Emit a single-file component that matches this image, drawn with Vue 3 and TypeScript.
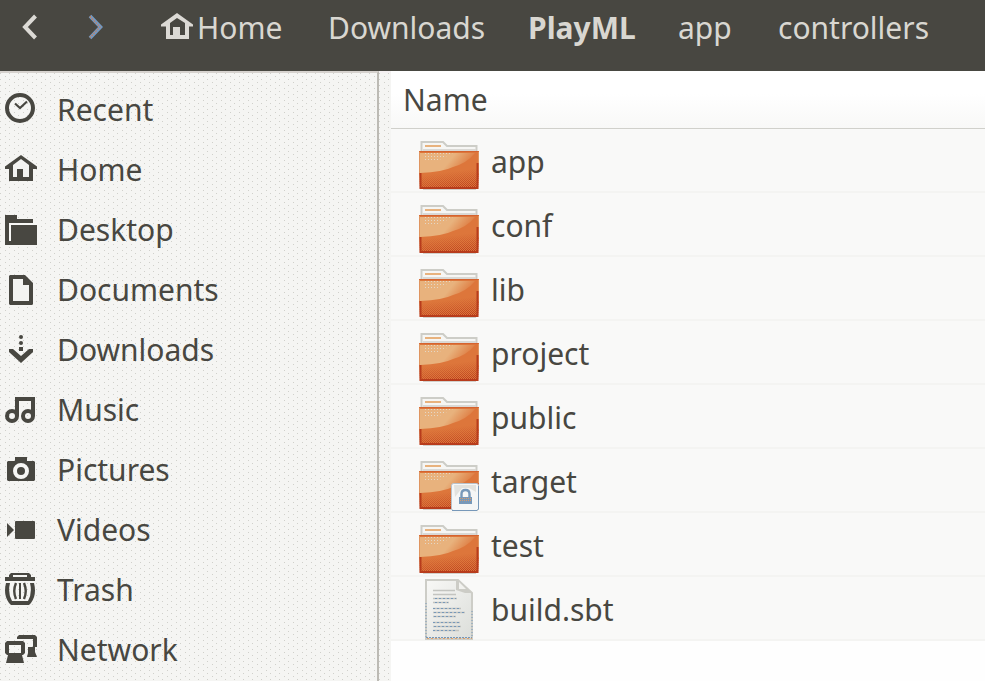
<script setup lang="ts">
import { ref } from 'vue'

interface Crumb { label: string; size: string; home?: boolean }
interface Entry { name: string; kind: 'folder' | 'file'; locked?: boolean }

const crumbs: Crumb[] = [
  { label: 'Home', size: 'wide', home: true },
  { label: 'Downloads', size: 'wider' },
  { label: 'PlayML', size: 'medium' },
  { label: 'app', size: 'small' },
  { label: 'controllers', size: 'wide' },
]
const current = ref('PlayML')

const places: string[] = [
  'Recent', 'Home', 'Desktop', 'Documents', 'Downloads',
  'Music', 'Pictures', 'Videos', 'Trash', 'Network',
]

const entries: Entry[] = [
  { name: 'app', kind: 'folder' },
  { name: 'conf', kind: 'folder' },
  { name: 'lib', kind: 'folder' },
  { name: 'project', kind: 'folder' },
  { name: 'public', kind: 'folder' },
  { name: 'target', kind: 'folder', locked: true },
  { name: 'test', kind: 'folder' },
  { name: 'build.sbt', kind: 'file' },
]
</script>

<template>
  <div class="window">
    <svg class="defs" aria-hidden="true">
      <defs>
        <linearGradient id="fade" x1="0.4" y1="0" x2="0.6" y2="1">
          <stop offset="0.55" stop-color="#000" />
          <stop offset="1" stop-color="#fff" />
        </linearGradient>
        <linearGradient id="gloss" x1="0" y1="0" x2="1" y2="0.3">
          <stop offset="0" stop-color="#e8b27d" />
          <stop offset="0.6" stop-color="#e8b27d" />
          <stop offset="1" stop-color="#e8b27d" stop-opacity="0" />
        </linearGradient>
        <linearGradient id="sheet" x1="0" y1="0" x2="1" y2="1">
          <stop offset="0" stop-color="#f8f8f6" />
          <stop offset="1" stop-color="#dcdeda" />
        </linearGradient>
        <pattern id="dots" width="2" height="2" patternUnits="userSpaceOnUse">
          <rect width="1" height="1" fill="#b83c1c" />
          <rect x="1" y="1" width="1" height="1" fill="#b83c1c" />
        </pattern>
        <pattern id="sparks" width="3" height="3" patternUnits="userSpaceOnUse">
          <rect width="1" height="1" fill="#e3e0d8" />
        </pattern>
        <mask id="shade"><rect y="22" width="60" height="38" fill="url(#fade)" /></mask>
      </defs>
    </svg>

    <header class="toolbar">
      <nav class="history" aria-label="History">
        <button type="button" class="arrow" aria-label="Back">
          <svg width="18" height="26" viewBox="0 0 18 26"><path d="M14.5 2 L4 13 L14.5 24" fill="none" stroke="#dcdad5" stroke-width="4" /></svg>
        </button>
        <button type="button" class="arrow" aria-label="Forward">
          <svg width="18" height="26" viewBox="0 0 18 26"><path d="M3 2 L13.5 13 L3 24" fill="none" stroke="#7399c2" stroke-width="3.6" /><path d="M3 2.5 L13 13 L3 23.5" fill="none" stroke="#d67b4a" stroke-width="1.2" stroke-dasharray="1.4 1.4" /></svg>
        </button>
      </nav>
      <nav class="path" aria-label="Path">
        <button
          v-for="crumb in crumbs"
          :key="crumb.label"
          type="button"
          class="crumb"
          :class="[crumb.size, { current: current === crumb.label }]"
          @click="current = crumb.label"
        >
          <svg v-if="crumb.home" class="crumb-icon" width="32" height="28" viewBox="0 0 32 28">
            <path d="M0 12.5 L16 1 L32 12.5 V14.5 H28 V27 H5 V14.5 H0 Z" fill="#dcdad5" />
            <path d="M9 23 V11 L16 6 L24 11 V23 H19 V15 H12 V23 Z" fill="#484741" />
          </svg>
          {{ crumb.label }}
        </button>
      </nav>
    </header>

    <div class="body">
      <aside class="sidebar">
        <ul class="places">
          <li v-for="place in places" :key="place">
            <a class="place" href="#">
              <svg class="glyph" width="32" height="32" viewBox="0 0 32 32" fill="#484741" aria-hidden="true">
                <g v-if="place === 'Recent'" fill="none" stroke="#484741">
                  <circle cx="15" cy="15" r="13" stroke-width="4" />
                  <path d="M10 10.5 L15 15 L22 8.5" stroke-width="2.2" />
                </g>
                <g v-else-if="place === 'Home'">
                  <path d="M0 13.5 L16 2 L32 13.5 V16 H28 V28 H4 V16 H0 Z" />
                  <path d="M8 24 V12 L16 6 L24 12 V24 H18 V16 H12 V24 Z" fill="#f3f3f1" />
                </g>
                <g v-else-if="place === 'Desktop'">
                  <path d="M0 2 H12 V6 H28 V10 H4 V28 H6 V12 H32 V32 H0 Z" />
                  <path d="M4 10 H32 V12 H6 V28 H4 Z" fill="#f8f8f6" />
                </g>
                <g v-else-if="place === 'Documents'">
                  <path d="M5 2 H20 L28 10 V31 L27 32 H5 L4 31 V3 Z" />
                  <path d="M8 6 H18 V12 H24 V28 H8 Z" fill="#f3f3f1" />
                </g>
                <g v-else-if="place === 'Downloads'">
                  <circle cx="16" cy="4" r="2" /><circle cx="16" cy="10" r="2" />
                  <rect x="14" y="14" width="4" height="4" />
                  <path d="M4 16 H8 L16 23 L24 16 H28 V19 L16 30 L4 19 Z" />
                </g>
                <g v-else-if="place === 'Music'">
                  <g fill="none" stroke="#484741" stroke-width="4">
                    <circle cx="7" cy="23" r="5" /><circle cx="23" cy="23" r="5" />
                    <path d="M12 23 V6 H28 V23" />
                  </g>
                </g>
                <g v-else-if="place === 'Pictures'">
                  <path d="M3 8 H10 V4 H22 V8 H29 L30 9 V27 L29 28 H3 L2 27 V9 Z" />
                  <circle cx="16" cy="18" r="6" fill="none" stroke="#f7f7f5" stroke-width="4" />
                </g>
                <g v-else-if="place === 'Videos'">
                  <path d="M2 10 L9 17 L2 24 Z" /><rect x="10" y="8" width="20" height="18" rx="1" />
                </g>
                <g v-else-if="place === 'Trash'">
                  <path d="M4 4 V2 L6 0 H24 L26 2 V4 H30 V8 H0 V4 Z M8 4 H22 V2 H8 Z" fill-rule="evenodd" />
                  <path d="M1 10 H5 Q2.5 20 7 28 H23 Q27.5 20 25 10 H29 Q32 22 26 30 L24 32 H6 L4 30 Q-2 22 1 10 Z" />
                  <path d="M11 10 Q7.5 18 11 26 M19 10 Q22.5 18 19 26" fill="none" stroke="#484741" stroke-width="2.4" />
                  <rect x="14" y="10" width="2" height="16" />
                </g>
                <g v-else>
                  <path d="M14 2 H30 L32 4 V14 H30 V19 L32 24 H22 L23 20 V14 H28 V6 H12 V4 Z" />
                  <path d="M2 8 H18 L20 10 V20 L18 22 H17 L19 30 H1 L3 22 H2 L0 20 V10 Z M4 12 V20 H16 V12 Z" fill-rule="evenodd" />
                </g>
              </svg>
              <span>{{ place }}</span>
            </a>
          </li>
        </ul>
      </aside>
      <div class="splitter"></div>
      <main class="files">
        <table class="listing">
          <thead>
            <tr><th scope="col">Name</th></tr>
          </thead>
          <tbody>
            <tr v-for="entry in entries" :key="entry.name">
              <td>
                <div class="entry">
                  <svg v-if="entry.kind === 'folder'" width="60" height="64" viewBox="0 0 60 64" aria-hidden="true">
                    <path d="M2.5 24 V13 H24 L28 17 H57.5 V24 Z" fill="#f6f6f4" stroke="#cdcdc7" stroke-width="2" />
                    <rect x="6" y="16" width="16" height="2" fill="#e8b27d" />
                    <rect x="4" y="20" width="53" height="2" fill="#dad9d5" />
                    <path d="M0 22 H60 V43 L59 60 H1 L0 43 Z" fill="#dd763b" />
                    <path d="M1 24 H56 Q48 34 34 38 Q24 43 1 44 Z" fill="url(#gloss)" />
                    <path d="M4 24 H34 L20 31 H4 Z" fill="url(#sparks)" opacity="0.8" />
                    <path d="M0 22 H60 V43 L59 60 H1 L0 43 Z" fill="url(#dots)" mask="url(#shade)" />
                    <path d="M0.5 22.5 H59.5" stroke="#d5632f" />
                    <path d="M0.5 23 V44 M59.5 23 V44" stroke="#df9560" />
                    <path d="M1.5 44 V59 H58.5 V34" fill="none" stroke="#b83c1c" stroke-width="2" />
                    <path d="M4 60.5 H57" stroke="#d2d0cb" />
                    <g v-if="entry.locked">
                      <rect x="32.5" y="34.5" width="27" height="27" rx="2" fill="#f5f6f6" stroke="#b7c2cc" />
                      <path d="M33 61.5 H58 L59.5 60 V37" fill="none" stroke="#7798b9" />
                      <path d="M35 36 H57 V43 L50 39 H43 L36 48 Z" fill="#e2e2de" />
                      <path d="M42.5 49 V45 Q42.5 41 46.5 41 Q50.5 41 50.5 45 V49" fill="none" stroke="#7798b9" stroke-width="2.4" />
                      <rect x="40" y="48" width="13" height="7" fill="#7798b9" />
                      <path d="M41 49.5 H52 M41 51.5 H52" stroke="#d79b6c" stroke-dasharray="1 1" />
                    </g>
                  </svg>
                  <svg v-else width="60" height="64" viewBox="0 0 60 64" aria-hidden="true">
                    <path d="M7 3 H39 L53 16 V62 H7 Z" fill="url(#sheet)" stroke="#cdcdc7" stroke-width="2" />
                    <path d="M37 3 V13 L46 16 H53 L39 3 Z" fill="#ccccc6" />
                    <path d="M40 5 V12 H47 Z" fill="#f2f2ef" />
                    <g stroke="#c3c4c0" stroke-width="1.6">
                      <path d="M14 13.5 H36 M14 17.5 H37 M14 21.5 H38 M14 25.5 H30 M14 31.5 H42 M14 35.5 H46 M14 39.5 H37 M14 45.5 H41 M14 49.5 H42 M14 53.5 H40" />
                    </g>
                    <g stroke="#7798b9" stroke-dasharray="2 2">
                      <path d="M16 21.5 H37 M16 25.5 H29 M14 31.5 H40 M15 35.5 H45 M15 39.5 H36 M14 45.5 H40 M15 49.5 H41 M14 53.5 H38" />
                    </g>
                    <path d="M7 26 V60 M53 34 V60" stroke="#7798b9" stroke-dasharray="1 2" />
                    <path d="M7 60.5 H53" stroke="#7798b9" stroke-dasharray="2 1" />
                    <path d="M8 61.5 H53" stroke="#dca26f" stroke-dasharray="2 2" />
                  </svg>
                  <span>{{ entry.name }}</span>
                </div>
              </td>
            </tr>
          </tbody>
        </table>
      </main>
    </div>
  </div>
</template>

<style>
body { margin: 0; background: #fefefe; }
</style>

<style scoped>
.window {
  display: flex;
  flex-direction: column;
  min-height: 100vh;
  font-family: "Noto Sans", "Open Sans", sans-serif;
  font-size: 30px;
  line-height: 40px;
  color: #484741;
  overflow: hidden;
}
.defs { position: absolute; width: 0; height: 0; }
.toolbar {
  display: flex;
  align-items: flex-start;
  height: 63px;
  padding-top: 8px;
  background: #484741;
}
.history { display: flex; gap: 48px; padding-left: 21px; width: 140px; }
button {
  margin: 0;
  padding: 0;
  border: 0;
  background: none;
  color: #d9d7d1;
  font: inherit;
  cursor: pointer;
}
.arrow { display: flex; align-items: center; height: 38px; width: 18px; }
.path { display: flex; }
.crumb { display: flex; align-items: center; gap: 4px; height: 40px; }
.crumb-icon { flex: none; margin-bottom: 4px; }
.small { width: 100px; }
.medium { width: 150px; }
.wide { width: 167px; }
.wider { width: 200px; }
.current { font-weight: 700; }
.body { display: flex; flex: 1; }
.sidebar {
  box-sizing: border-box;
  width: 379px;
  flex: none;
  border-top: 2px solid #d6d2ce;
  border-right: 2px solid #bcbab4;
}
.sidebar, .splitter {
  background:
    conic-gradient(from 270deg at 1px 1px, #d0d0cb 90deg, transparent 0) 0 0 / 9px 6px,
    conic-gradient(from 270deg at 1px 1px, #d0d0cb 90deg, transparent 0) 5px 3px / 9px 6px,
    #f5f5f3;
}
.splitter { width: 12px; flex: none; border-top: 2px solid #f4f0f1; }
.places { list-style: none; margin: 0; padding: 7px 0 0; }
.place {
  display: flex;
  align-items: center;
  gap: 20px;
  height: 60px;
  padding-left: 5px;
  color: inherit;
  text-decoration: none;
}
.glyph { flex: none; margin-bottom: 2px; }
.files { flex: 1; min-width: 0; background: #fefefe; }
.listing { width: 100%; border-collapse: separate; border-spacing: 0; }
th {
  height: 57px;
  padding: 0 0 0 12px;
  border-bottom: 1px solid #d0d0cb;
  background: linear-gradient(#fff 40%, #f8f8f7);
  font-weight: 400;
  text-align: left;
}
td { height: 64px; padding: 0; background: linear-gradient(#f9f9f8 62px, #f4f4f2 62px); }
.entry { display: flex; align-items: center; gap: 12px; height: 64px; padding-left: 28px; }
.entry span { padding-top: 2px; }
.entry svg { flex: none; }
</style>
